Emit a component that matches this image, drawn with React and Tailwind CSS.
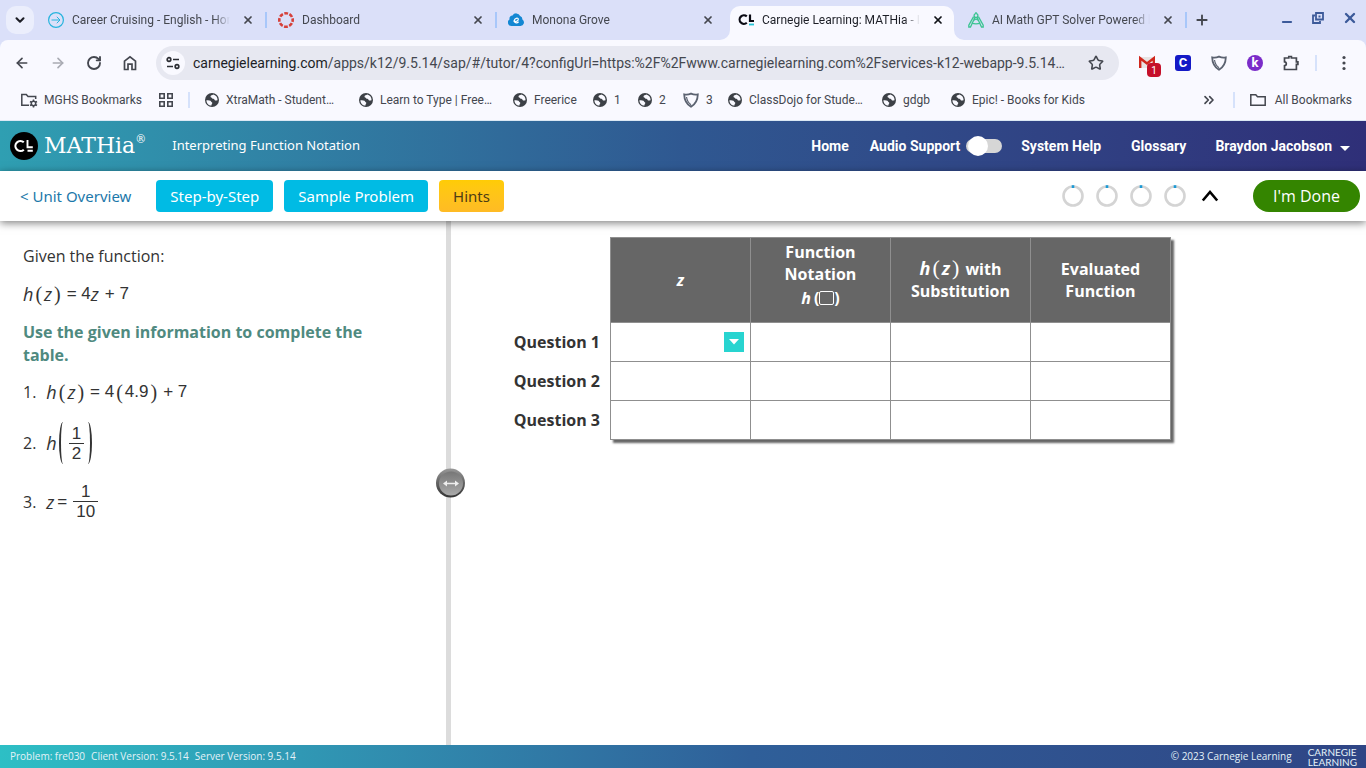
import { useState } from 'react';
import { ArrowLeft, ArrowRight, ChevronDown, ChevronsRight, Minus, Plus, RotateCw, Star, X } from 'lucide-react';

const TABS = [
  { id: 'cruising', title: 'Career Cruising - English - Home', icon: CruisingIcon },
  { id: 'dashboard', title: 'Dashboard', icon: CanvasIcon },
  { id: 'monona', title: 'Monona Grove', icon: CloudIcon },
  { id: 'mathia', title: 'Carnegie Learning: MATHia - Interpreting', icon: CarnegieIcon, active: true },
  { id: 'solver', title: 'AI Math GPT Solver Powered by GPT', icon: CompassIcon },
];

const BOOKMARKS = [
  { title: 'XtraMath - Student…', width: 'w-[154px]' },
  { title: 'Learn to Type | Free…', width: 'w-[154px]' },
  { title: 'Freerice', width: 'w-[80px]' },
  { title: '1', width: 'w-[45px]' },
  { title: '2', width: 'w-[45px]' },
  { title: '3', width: 'w-[45px]', shield: true },
  { title: 'ClassDojo for Stude…', width: 'w-[154px]' },
  { title: 'gdgb', width: 'w-[69px]' },
  { title: 'Epic! - Books for Kids', width: 'w-[160px]' },
];

function CruisingIcon() {
  return (
    <svg width="16" height="16" viewBox="0 0 16 16" fill="none" stroke="#27b4dd">
      <circle cx="8" cy="8" r="7.4" strokeWidth="1.2" />
      <path d="M3.5 8h8.500M8.800 4.800 12 8l-3.200 3.200" />
    </svg>
  );
}

function CanvasIcon() {
  return (
    <svg width="16" height="16" viewBox="0 0 16 16" fill="none" stroke="#d6403a">
      <circle cx="8" cy="8" r="6.700" strokeWidth="2.600" strokeDasharray="3.800 1.460" strokeDashoffset="1.900" />
    </svg>
  );
}

function CloudIcon() {
  return (
    <svg width="16" height="16" viewBox="0 0 16 16">
      <path d="M3.600 14A3.600 3.600 0 0 1 1.500 7.400 3.400 3.400 0 0 1 4.500 3.600a4.200 4.200 0 0 1 7.600.4 3.500 3.500 0 0 1 2.300 3.600A3.500 3.500 0 0 1 12.500 14z" fill="#1387d3" />
      <path d="M5.500 9.200c3 .6 5-.6 4.800-2.200-.3-1.500-3.600-.8-4 1.400-.4 2.400 2.400 3.200 4.300 1.400" fill="none" stroke="#fff" strokeWidth="1.200" />
    </svg>
  );
}

function CarnegieIcon() {
  return (
    <svg width="16" height="16" viewBox="0 0 16 16" fill="none" stroke="#0b0b14" strokeWidth="2.200">
      <path d="M8.800 4.400A4.300 4.300 0 1 0 8.800 10.800" />
      <path d="M12 2.500v6.500H16" />
      <path d="M11 12.500h5" stroke="#25c4d6" strokeWidth="1.800" />
    </svg>
  );
}

function CompassIcon() {
  return (
    <svg width="16" height="16" viewBox="0 0 16 16" fill="none" stroke="#3bc492" strokeWidth="1.300">
      <circle cx="8" cy="3.500" r="1.900" />
      <path d="M8 0v1.600M7 5.200 2.500 15H.8v-1.800L5.600 4.600M9 5.200 13.500 15h1.700v-1.800L10.400 4.600M3.500 10.800c3 1.400 6 1.400 9 0M5.500 8.500 8 7l2.500 1.500" />
    </svg>
  );
}

function GlobeIcon() {
  return (
    <svg width="14" height="14" viewBox="0 0 14 14" className="shrink-0">
      <circle cx="7" cy="7" r="7" fill="#3c4046" />
      <path d="M1.400 7.200c2 .2 4.300-.1 4.700 1.300.2 1 1.200.6 1.200 1.600 0 1-.9 1-.8 2.400C3.500 12.500 1.400 10.200 1.400 7.200z" fill="#f9f9ff" />
      <path d="M8.200 1.500c-.8.9-2.800.7-2.700 2.200.1 1 1.300.5 1.500 1.400.2.900 1.200.6 1.900.9.900.4.700 1.700 1.800 1.600.7 0 1-.5 1.900-.4C12.600 4.200 10.700 1.900 8.200 1.500z" fill="#f9f9ff" />
    </svg>
  );
}

function ShieldIcon() {
  return (
    <svg width="16" height="16" viewBox="0 0 16 16" fill="none" stroke="#5b6270" strokeWidth="1.800" className="shrink-0">
      <path d="M8 1.600C5.600 2.700 3.500 2.900 1.200 2.400c.1 5.600 2.300 9.500 6.800 12.400 4.500-2.900 6.700-6.800 6.800-12.400C12.500 2.900 10.400 2.700 8 1.600z" />
      <path d="M3.500 5C4 8.500 5.500 11 8 12.800" strokeWidth="1.200" />
    </svg>
  );
}

function FolderIcon({ gear }) {
  return (
    <svg width="18" height="16" viewBox="0 0 18 16" fill="none" stroke="#44474f" strokeWidth="1.500">
      {gear ? (
        <>
          <path d="M9 13.200H1.800V2.500h4.500l1.700 2h7.700v2.500" />
          <circle cx="13.500" cy="11.500" r="2.200" />
          <path d="M13.500 7.500v1.800M13.500 13.700v1.800M10 9.500l1.600.9M15.400 12.600l1.600.9M10 13.500l1.600-.9M15.400 10.400l1.600-.9" />
        </>
      ) : (
        <path d="M1.800 13.200V2.800h5l1.700 2h7.700v8.400z" />
      )}
    </svg>
  );
}

function Tab({ tab, divider }) {
  const Icon = tab.icon;
  return (
    <div className="relative flex h-10 w-[230px] min-w-0 items-center">
      {tab.active && (
        <div className="absolute top-[6px] right-1 bottom-0 left-[2px] rounded-t-[10px] bg-[#f9f9ff]">
          <svg className="absolute bottom-0 -left-[10px]" width="10" height="10"><path d="M10 0v10H0A10 10 0 0 0 10 0z" fill="#f9f9ff" /></svg>
          <svg className="absolute -right-[10px] bottom-0" width="10" height="10"><path d="M0 0v10h10A10 10 0 0 1 0 0z" fill="#f9f9ff" /></svg>
        </div>
      )}
      <button className={`relative flex min-w-0 flex-1 items-center gap-2 pl-[10px] text-xs ${tab.active ? 'text-[#1c1e26]' : 'text-[#44474f]'}`}>
        <span className="shrink-0"><Icon /></span>
        <span className="flex-1 overflow-hidden mask-r-from-90% text-left whitespace-nowrap">{tab.title}</span>
      </button>
      <button aria-label={`Close ${tab.title}`} className={`relative ml-[10px] flex w-4 justify-center ${tab.active ? 'text-[#111318]' : 'text-[#44474f]'}`}>
        <X size={12} strokeWidth={3.5} />
      </button>
      <span className={`mr-[1px] ml-[9px] h-4 w-[2px] ${divider ? 'bg-[#a8c7fa]' : ''}`} />
    </div>
  );
}

function BrowserChrome() {
  return (
    <div className="bg-[#dbe0f9] font-[Roboto,sans-serif]">
      <div className="flex h-10 items-center">
        <button aria-label="Search tabs" className="ml-[6px] flex size-7 shrink-0 items-center justify-center rounded-[10px] bg-[#ebeefc]">
          <ChevronDown size={14} strokeWidth={3.5} className="text-[#1c1e26]" />
        </button>
        <div className="ml-1 flex min-w-0">
          {TABS.map((tab, i) => (
            <Tab key={tab.id} tab={tab} divider={i !== 2 && i !== 3} />
          ))}
        </div>
        <button aria-label="New tab" className="ml-[6px] text-[#44474f]"><Plus size={16} strokeWidth={2.800} /></button>
        <div className="mr-2 mb-1 ml-auto flex items-center gap-[18px] text-[#3c5a9a]">
          <button aria-label="Minimize" className="pt-2"><Minus size={14} strokeWidth={3.500} /></button>
          <button aria-label="Restore">
            <svg width="12" height="12" viewBox="0 0 12 12" fill="none" stroke="currentColor" strokeWidth="1.800">
              <path d="M4 1h7v6.500H4zM3 3.500H1V11h7V9M6.500 4.500h2" />
            </svg>
          </button>
          <button aria-label="Close window"><X size={16} strokeWidth={3.500} /></button>
        </div>
      </div>

      <div className="rounded-t-lg bg-[#f9f9ff]">
        <div className="flex h-[46px] items-center text-[#44474f]">
          <div className="flex items-center gap-5 pl-[14px]">
            <button aria-label="Back"><ArrowLeft size={16} strokeWidth={2.500} /></button>
            <button aria-label="Forward" className="text-[#a9abb3]"><ArrowRight size={16} strokeWidth={2.500} /></button>
            <button aria-label="Reload"><RotateCw size={16} strokeWidth={2.800} /></button>
            <button aria-label="Home page">
              <svg width="16" height="16" viewBox="0 0 16 16" fill="none" stroke="currentColor" strokeWidth="1.700">
                <path d="M2.500 6.200 8 1.800l5.500 4.400v8.300H10V9.200H6v5.300H2.500z" />
              </svg>
            </button>
          </div>
          <div className="ml-[18px] flex h-[34px] min-w-0 flex-1 items-center rounded-full bg-[#e7e8f1] pr-[15px] pl-[5px]">
            <button aria-label="Site information" className="flex size-6 shrink-0 items-center justify-center rounded-full bg-[#f9f9ff]">
              <svg width="14" height="14" viewBox="0 0 14 14" fill="none" stroke="#2b2d33" strokeWidth="1.700">
                <circle cx="3" cy="3.500" r="1.800" />
                <path d="M7 3.500h6M1 10.500h6" />
                <circle cx="11" cy="10.500" r="1.800" />
              </svg>
            </button>
            <p className="ml-2 min-w-0 flex-1 truncate text-sm text-[#44474f]">
              <span className="text-[#1c1e26]">carnegielearning.com</span>/apps/k12/9.5.14/sap/#/tutor/4?configUrl=https:%2F%2Fwww.carnegielearning.com%2Fservices-k12-webapp-9.5.14…
            </p>
            <button aria-label="Bookmark this page"><Star size={16} strokeWidth={2.400} /></button>
          </div>
          <div className="ml-5 flex items-center gap-5">
            <button aria-label="Gmail" className="relative">
              <svg width="16" height="16" viewBox="0 0 16 16">
                <path d="M0 2h16v11H0z" fill="#e8e4e4" />
                <path d="M1.200 13V3.200L8 8.500l6.800-5.300V13" fill="none" stroke="#d0271d" strokeWidth="2.400" />
              </svg>
              <span className="absolute top-2 left-2 flex size-[14px] items-center justify-center rounded-[4px] bg-[#c5102a] text-[10px] text-white">1</span>
            </button>
            <button aria-label="Clever" className="flex size-4 items-center justify-center rounded-[3px] bg-[#1419c6] text-[13px] font-bold text-white">C</button>
            <button aria-label="Securly"><ShieldIcon /></button>
            <button aria-label="Kami" className="flex size-4 items-center justify-center rounded-full bg-[#7b2cc9] text-[13px] font-bold text-white">k</button>
            <button aria-label="Extensions">
              <svg width="16" height="16" viewBox="0 0 16 16" fill="none" stroke="currentColor" strokeWidth="1.700">
                <path d="M1.500 3h4.300V1.500h2.600V3h5v3.800h1.500v2.600h-1.500v5.100H1.500v-3.800c2.400-.2 2.400-3.700 0-3.900z" />
              </svg>
            </button>
          </div>
          <span className="ml-4 h-4 w-[2px] bg-[#d6e2fb]" />
          <button aria-label="Chrome menu" className="mr-[14px] ml-[19px]">
            <svg width="16" height="16" viewBox="0 0 16 16" fill="currentColor">
              <circle cx="8" cy="2.500" r="1.600" /><circle cx="8" cy="8" r="1.600" /><circle cx="8" cy="13.500" r="1.600" />
            </svg>
          </button>
        </div>

        <div className="flex h-[34px] items-center pb-[6px] pl-5 text-xs text-[#44474f]">
          <button className="flex items-center gap-[6px]"><FolderIcon gear />MGHS Bookmarks</button>
          <button aria-label="Tab groups" className="ml-[17px]">
            <svg width="14" height="14" viewBox="0 0 14 14" fill="none" stroke="currentColor" strokeWidth="1.600">
              <path d="M.8.8h4.400v4.400H.8zM8.800.8h4.400v4.400H8.800zM.8 8.800h4.400v4.400H.8zM8.800 8.800h4.400v4.400H8.800z" />
            </svg>
          </button>
          <span className="ml-[15px] h-4 w-[2px] bg-[#d6e2fb]" />
          <div className="ml-[15px] flex min-w-0 flex-1 overflow-hidden">
            {BOOKMARKS.map((b) => (
              <a key={b.title} href="#" className={`flex shrink-0 items-center gap-[7px] whitespace-nowrap ${b.width}`}>
                {b.shield ? <ShieldIcon /> : <GlobeIcon />}
                {b.title}
              </a>
            ))}
          </div>
          <button aria-label="More bookmarks"><ChevronsRight size={16} strokeWidth={2.500} /></button>
          <span className="ml-4 h-4 w-[2px] bg-[#d6e2fb]" />
          <button className="mr-[14px] ml-[14px] flex items-center gap-2"><FolderIcon />All Bookmarks</button>
        </div>
      </div>
    </div>
  );
}

function Header() {
  const [audio, setAudio] = useState(false);
  return (
    <header className="relative flex h-[51px] items-center border-t border-[#dbe8f4] bg-linear-to-r from-[#2f9fb2] via-[#2f5891] via-50% to-[#2f2f78] text-white">
      <svg width="28" height="28" viewBox="0 0 28 28" className="ml-[10px]" fill="none" stroke="#fff" strokeWidth="2.200">
        <circle cx="14" cy="14" r="14" fill="#000" stroke="none" />
        <path d="M13.800 10.300a5 5 0 1 0 0 7.400" />
        <path d="M17.500 8v7.200h5.300M17.500 18.800h5.300" strokeWidth="1.900" />
      </svg>
      <div className="ml-[6px] flex font-['DejaVu_Serif',serif] text-[22px] leading-7">
        MATHia<sup className="top-0 text-[11px] leading-4">®</sup>
      </div>
      <h1 className="ml-[26px] font-['Noto_Sans',sans-serif] text-[13px]">Interpreting Function Notation</h1>
      <nav className="ml-auto flex items-center font-[Roboto,sans-serif] text-sm font-bold">
        <a href="#">Home</a>
        <label className="ml-[21px] flex cursor-pointer items-center gap-[6px]">
          Audio Support
          <span className="relative flex h-[14px] w-9 items-center rounded-full bg-[#d6d6d6] px-[2px]">
            <input type="checkbox" checked={audio} onChange={(e) => setAudio(e.target.checked)} className="peer absolute inset-0 cursor-pointer opacity-0" />
            <span className="size-5 shrink-0 rounded-full bg-white peer-checked:ml-auto" />
          </span>
        </label>
        <a href="#" className="ml-[19px]">System Help</a>
        <a href="#" className="ml-[30px]">Glossary</a>
        <button className="mr-4 ml-[29px] flex items-center gap-2">
          Braydon Jacobson
          <svg width="10" height="5" viewBox="0 0 10 5" className="mt-1" fill="currentColor"><path d="M0 0h10L5 5z" /></svg>
        </button>
      </nav>
    </header>
  );
}

function ProgressRing() {
  return (
    <svg width="22" height="22" viewBox="0 0 22 22" fill="none">
      <circle cx="11" cy="11" r="9.500" stroke="#d4d4d4" strokeWidth="2.600" />
      <path d="M9.700 1.600h2.600" stroke="#1c9ad6" strokeWidth="2.800" />
    </svg>
  );
}

function Toolbar() {
  return (
    <div className="relative z-10 flex h-[50px] items-center bg-white font-['Noto_Sans',sans-serif] text-[15px] shadow-[0_2px_8px_rgba(0,0,0,0.5)]">
      <a href="#" className="ml-5 text-[#1c78aa]">&lt; Unit Overview</a>
      <div className="ml-[25px] flex gap-[11px]">
        <button className="h-8 rounded-[4px] bg-[#00bbe4] px-[14px] text-white">Step-by-Step</button>
        <button className="h-8 rounded-[4px] bg-[#00bbe4] px-[14px] text-white">Sample Problem</button>
        <button className="h-8 rounded-[4px] bg-linear-to-b from-[#ffcc05] to-[#ffbb24] px-[14px] text-[#4d3d14]">Hints</button>
      </div>
      <div className="ml-auto flex items-center gap-3">
        {[1, 2, 3, 4].map((n) => <ProgressRing key={n} />)}
      </div>
      <button aria-label="Hide skills" className="ml-3">
        <svg width="24" height="24" viewBox="0 0 24 24" fill="none" stroke="#000" strokeWidth="2.600"><path d="M4.800 16.500 12 8l7.200 8.500" /></svg>
      </button>
      <button className="mr-[6px] ml-[31px] h-8 rounded-full bg-[#348500] px-5 font-['Open_Sans',sans-serif] text-base text-white">I&apos;m Done</button>
    </div>
  );
}

function Fraction({ top, bottom }) {
  return (
    <span className="inline-flex flex-col text-center leading-[19px]">
      <span className="border-b border-[#333]">{top}</span>
      <span className="px-[3px]">{bottom}</span>
    </span>
  );
}

const Var = ({ children }) => <i className="font-['Open_Sans',sans-serif] text-lg leading-5">{children}</i>;

const Paren = ({ children }) => <span className="mx-[2px] font-['Liberation_Serif',serif] text-xl leading-5">{children}</span>;

const TallOpen = () => <span className="mx-[2px] h-[42px] w-2 rounded-[50%] border-l-2 border-[#333]" />;
const TallClose = () => <span className="h-[42px] w-2 rounded-[50%] border-r-2 border-[#333]" />;

const mathClass = "flex items-center font-['Liberation_Sans',sans-serif] text-[17px] leading-6";

function Instructions() {
  return (
    <section className="w-[446px] shrink-0 pt-[23px] pl-[23px] text-[#333]">
      <p className="leading-6">Given the function:</p>
      <p className={`mt-[14px] ${mathClass}`}>
        <Var>h</Var><Paren>(</Paren><Var>z</Var><Paren>)</Paren><span className="ml-1">= 4</span><Var>z</Var><span className="ml-[6px]">+ 7</span>
      </p>
      <p className="mt-[15px] max-w-[360px] leading-[23px] font-bold text-[#4f8a80]">Use the given information to complete the table.</p>
      <ol>
        <li className="mt-[13px] flex items-center gap-[10px]">
          <span>1.</span>
          <span className={mathClass}>
            <Var>h</Var><Paren>(</Paren><Var>z</Var><Paren>)</Paren><span className="ml-1">= 4</span><Paren>(</Paren>4.9<Paren>)</Paren><span className="ml-1">+ 7</span>
          </span>
        </li>
        <li className="mt-[17px] flex h-11 items-center gap-[10px]">
          <span>2.</span>
          <span className={mathClass}>
            <Var>h</Var><TallOpen /><Fraction top="1" bottom="2" /><TallClose />
          </span>
        </li>
        <li className="mt-[17px] flex items-center gap-[10px]">
          <span>3.</span>
          <span className={mathClass}>
            <Var>z</Var><span className="mr-[6px] ml-[3px]">=</span><Fraction top="1" bottom="10" />
          </span>
        </li>
      </ol>
    </section>
  );
}

const headClass = 'w-[140px] border border-[#8f8f8f] bg-[#666] font-bold';

const HeadParen = ({ children }) => <span className="mx-[2px] font-['Liberation_Serif',serif] text-[22px] leading-5 font-normal">{children}</span>;

function Worksheet() {
  const questions = ['Question 1', 'Question 2', 'Question 3'];
  return (
    <section className="relative flex-1 pt-4 pl-[63px]">
      <div className="flex items-start">
        <div className="w-[96px] shrink-0 pt-[85px] pr-[10px] text-right font-bold whitespace-nowrap text-[#333]">
          {questions.map((q, i) => (
            <div key={q} id={`q${i + 1}`} className="flex h-[39px] items-center justify-end">{q}</div>
          ))}
        </div>
        <table className="border-collapse bg-white shadow-[3px_3px_2px_#666]">
          <thead>
            <tr className="h-[85px] text-center leading-[22px] text-white">
              <th className={headClass}><i>z</i></th>
              <th className={`pb-[10px] ${headClass}`}>
                Function<br />Notation
                <span className="mt-[2px] flex items-center justify-center">
                  <i className="mr-[3px]">h</i>(<span className="h-[14px] w-[15px] rounded-[2px] border border-white" />)
                </span>
              </th>
              <th className={headClass}>
                <i className="text-lg leading-5">h</i><HeadParen>(</HeadParen><i className="text-lg leading-5">z</i><HeadParen>)</HeadParen> with<br />Substitution
              </th>
              <th className={headClass}>Evaluated<br />Function</th>
            </tr>
          </thead>
          <tbody>
            {questions.map((q, row) => (
              <tr key={q} aria-labelledby={`q${row + 1}`} className="h-[39px]">
                {[0, 1, 2, 3].map((col) => (
                  <td key={col} className="border border-[#8f8f8f]">
                    {row === 0 && col === 0 && (
                      <button aria-label="Open choices for z" className="mr-[6px] ml-auto flex size-5 items-center justify-center bg-[#28d4d0]">
                        <svg width="12" height="6" viewBox="0 0 12 6" fill="#fff"><path d="M1 0h10L6 5.500z" /></svg>
                      </button>
                    )}
                  </td>
                ))}
              </tr>
            ))}
          </tbody>
        </table>
      </div>
    </section>
  );
}

function Splitter() {
  return (
    <div className="relative w-[5px] shrink-0 bg-[#dcdcdc]">
      <button aria-label="Resize panels" className="absolute top-1/2 -left-[10px] z-10 flex size-[29px] -translate-y-1/2 items-center justify-center rounded-full bg-linear-to-b from-[#999] to-[#333]">
        <span className="flex size-6 items-center justify-center rounded-full bg-linear-to-b from-[#777] to-[#aaa]">
          <svg width="18" height="8" viewBox="0 0 18 8" fill="#eee"><path d="M1 4l4-3v2.200h8V1l4 3-4 3V4.800H5V7z" /></svg>
        </span>
      </button>
    </div>
  );
}

function Footer() {
  return (
    <footer className="flex h-[23px] items-center bg-linear-to-r from-[#2dbfc5] via-[#2f5f99] via-55% to-[#2f4585] text-[10px] text-[#e4f2f8]">
      <div className="ml-[10px] flex gap-[6px]">
        <span>Problem: fre030</span>
        <span>Client Version: 9.5.14</span>
        <span>Server Version: 9.5.14</span>
      </div>
      <span className="ml-auto">© 2023 Carnegie Learning</span>
      <div className="mr-[9px] ml-4 flex flex-col font-[Lato,sans-serif] leading-[10px]">
        <span>CARNEGIE</span>
        <span>LEARNING</span>
      </div>
    </footer>
  );
}

export default function App() {
  return (
    <div className="flex min-h-screen flex-col bg-white font-['Open_Sans','Noto_Sans',sans-serif]">
      <BrowserChrome />
      <Header />
      <Toolbar />
      <main className="flex flex-1">
        <Instructions />
        <Splitter />
        <Worksheet />
      </main>
      <Footer />
    </div>
  );
}
